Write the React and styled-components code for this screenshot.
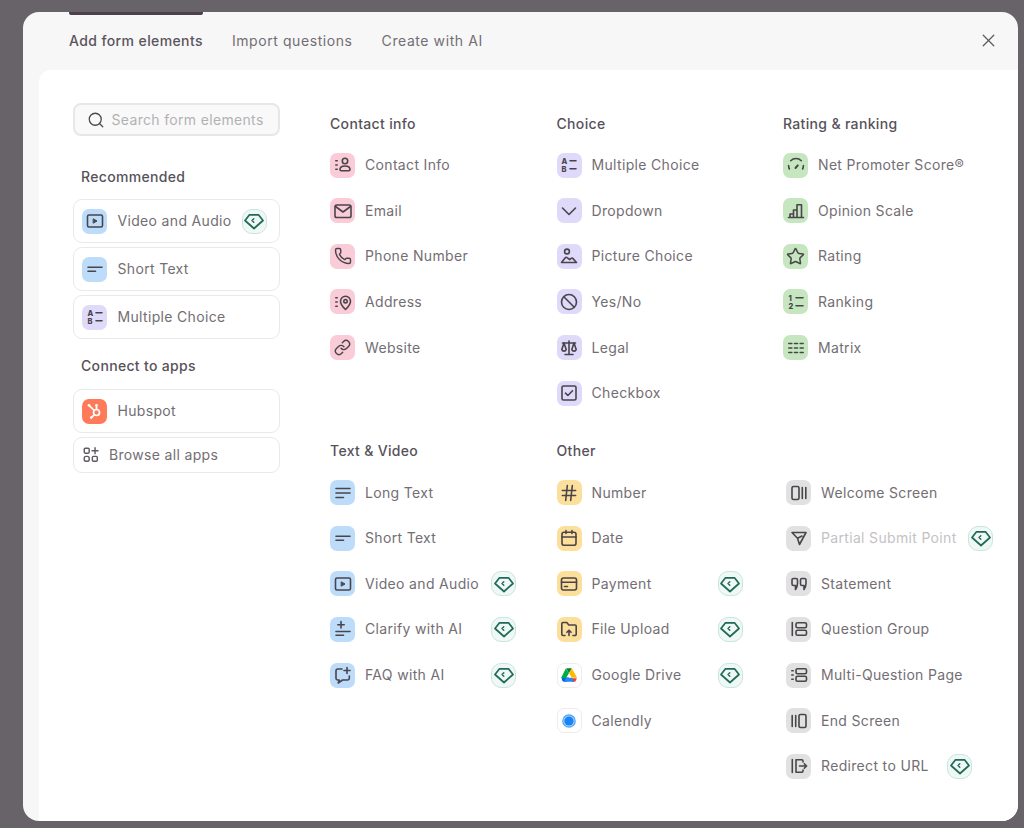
import React from 'react'
import styled, { createGlobalStyle } from 'styled-components'
import { Phone, Link, Star, Hash, X, Search } from 'lucide-react'

const GlobalStyle = createGlobalStyle`
  html, body {
    margin: 0;
    background: #686269;
    font-family: Inter, "Liberation Sans", sans-serif;
    -webkit-font-smoothing: antialiased;
  }
`

const tints = {
  pink: '#f9ccd7',
  violet: '#dfd9fa',
  green: '#c5e6bf',
  blue: '#bcdcf9',
  yellow: '#fddf9c',
  grey: '#e1e1e1',
  white: '#ffffff',
  orange: '#ff7a59',
}

const Glyph = ({ children, size = 20 }) => (
  <svg width={size} height={size} viewBox="0 0 20 20" fill="none" stroke="currentColor" strokeWidth="1.6" strokeLinecap="round" strokeLinejoin="round">
    {children}
  </svg>
)

const Letter = styled.text`
  font-family: Inter, "Liberation Sans", sans-serif;
  font-size: 7.5px;
  font-weight: 800;
  fill: currentColor;
  stroke: none;
`

const glyphs = {
  contact: <Glyph><path d="M2.8 5.8h1.4M2.8 10h1.4M2.8 14.2h1.4" /><circle cx="12" cy="6" r="2.7" /><path d="M7 14.6c0-2.2 2.2-3.6 5-3.6s5 1.4 5 3.6c0 .8-.5 1.1-1.1 1.1H8.1c-.6 0-1.1-.3-1.1-1.1z" /></Glyph>,
  email: <Glyph><rect x="2" y="4" width="16" height="12.5" rx="1.8" /><path d="M2.5 5.5 10 11l7.5-5.5" /></Glyph>,
  phone: <Phone size={18} strokeWidth={1.9} />,
  address: <Glyph><path d="M2.8 5.8h1.4M2.8 10h1.4M2.8 14.2h1.4" /><path d="M12.5 17.5c-2.8-2.5-5-5-5-8.2a5 5 0 0 1 10 0c0 3.2-2.2 5.7-5 8.2z" /><circle cx="12.5" cy="9.2" r="1.7" /></Glyph>,
  link: <Link size={17} strokeWidth={2} />,
  choice: <Glyph><Letter x="2.5" y="8.5">A</Letter><Letter x="2.5" y="16.5">B</Letter><path d="M11 5.8h6M11 13.8h6" /></Glyph>,
  dropdown: <Glyph><path d="M3.5 7 10 13.5 16.5 7" /></Glyph>,
  picture: <Glyph><circle cx="8" cy="5.5" r="2.4" /><path d="M2.5 16.5 6.300 11.800c.5-.6 1.200-.7 1.800-.2l2.600 2 1.500-1.200c.6-.5 1.400-.4 1.800.2l3.500 3.900z" /></Glyph>,
  yesno: <Glyph><circle cx="10" cy="10" r="7.5" /><path d="M4.8 4.7 15.3 15.3" /></Glyph>,
  legal: <Glyph><path d="M10 3v13.5M6 16.5h8M3.500 5h13" /><path d="M5 5 2.8 11.500a2.300 2.300 0 0 0 4.400 0zM15 5l-2.200 6.500a2.300 2.300 0 0 0 4.400 0z" /></Glyph>,
  checkbox: <Glyph><rect x="3" y="3" width="14" height="14" rx="1.5" /><path d="m6.500 10.200 2.400 2.300 4.600-4.700" /></Glyph>,
  nps: <Glyph><path d="M4.700 5.700a7.500 7.500 0 0 1 10.600 0M2.600 10.500c0 1.200.2 2.400.8 3.500M17.400 10.500c0 1.200-.2 2.400-.8 3.500" /><path d="m9.500 13 2.300-2.600" strokeWidth="2" /></Glyph>,
  scale: <Glyph><path d="M2.500 16.500h15M4 16.500V13h3.500v3.500M7.500 16.500V9H11v7.500M11 16.500V3.700h4.500v12.800" /></Glyph>,
  star: <Star size={19} strokeWidth={1.9} />,
  ranking: <Glyph><Letter x="2.5" y="8.5">1</Letter><Letter x="2.5" y="16.5">2</Letter><path d="M10 5.800h7M10 13.800h7" /></Glyph>,
  matrix: <Glyph><path d="M2.800 5.500h3M8.500 5.500h3M14.200 5.500h3M2.800 10h3M8.500 10h3M14.200 10h3M2.800 14.500h3M8.500 14.500h3M14.200 14.500h3" /></Glyph>,
  longText: <Glyph><path d="M3 5.500h14M3 10h14M3 14.500h7.500" /></Glyph>,
  shortText: <Glyph><path d="M3 8.300h14M3 12.300h7.500" /></Glyph>,
  video: <Glyph><rect x="2.5" y="4" width="15" height="12" rx="1.5" /><path d="M8.500 8l3.500 2-3.500 2z" fill="currentColor" strokeWidth="1" /></Glyph>,
  clarify: <Glyph><path d="M8 2.500v6.500M4.800 5.800h6.400M3 12.500h14M3 16.300h7.500" /></Glyph>,
  faq: <Glyph><path d="M9 4H4.800A1.800 1.800 0 0 0 3 5.800v7.400A1.800 1.800 0 0 0 4.800 15h1.400l-1 3 4.300-3h5a1.800 1.800 0 0 0 1.800-1.800V11" /><path d="M14 2.500v6M11 5.500h6" /></Glyph>,
  hash: <Hash size={20} strokeWidth={1.9} />,
  date: <Glyph><rect x="3" y="4.2" width="14" height="13" rx="2" /><path d="M3 9h14M7 2.500v3M13 2.500v3" /></Glyph>,
  payment: <Glyph><rect x="2.5" y="4" width="15" height="12" rx="2" /><path d="M2.500 8.200h15M5.500 12.500h3" /></Glyph>,
  upload: <Glyph><path d="M6 16.500H4a1.200 1.200 0 0 1-1.200-1.200V4.700A1.200 1.200 0 0 1 4 3.500h3.800l2 2.500H16a1.200 1.200 0 0 1 1.200 1.200v8.100a1.200 1.200 0 0 1-1.200 1.200h-2" /><path d="M10 16.500v-5M7.900 13.300 10 11.200l2.100 2.100" /></Glyph>,
  welcome: <Glyph><rect x="3" y="3.5" width="7" height="13" rx="1.5" /><path d="M13.300 4.500v11M16.800 4.500v11" /></Glyph>,
  partial: <Glyph><path d="M3 4.500h14l-6.500 12-2-6.300zM8.500 10.200 13 8" /></Glyph>,
  statement: <Glyph><path d="M3 6a1.500 1.500 0 0 1 1.500-1.500h2.500A1.500 1.500 0 0 1 8.500 6v3.500c0 2.200-.7 4-2 6V11.500H4.500A1.500 1.500 0 0 1 3 10zM11.500 6A1.500 1.500 0 0 1 13 4.500h2.500A1.500 1.500 0 0 1 17 6v3.500c0 2.200-.7 4-2 6V11.500h-2a1.500 1.500 0 0 1-1.500-1.500z" /></Glyph>,
  group: <Glyph><path d="M3.300 3.500v13" /><rect x="7" y="3.8" width="10.5" height="5" rx="1.5" /><rect x="7" y="11.2" width="10.5" height="5" rx="1.5" /></Glyph>,
  multi: <Glyph><path d="M2.800 5.800h1.400M2.800 10h1.400M2.800 14.200h1.400" /><rect x="7" y="3.8" width="10.5" height="5" rx="1.5" /><rect x="7" y="11.2" width="10.5" height="5" rx="1.5" /></Glyph>,
  end: <Glyph><path d="M3.200 4.500v11M6.700 4.500v11" /><rect x="10" y="3.5" width="7" height="13" rx="1.5" /></Glyph>,
  redirect: <Glyph><path d="M3.300 3.500v13M14 6V5a1.200 1.200 0 0 0-1.200-1.200H7v12.400h5.800A1.200 1.200 0 0 0 14 15v-1" /><path d="M10.500 10h7M15.300 7.700l2.300 2.300-2.300 2.300" /></Glyph>,
  browse: <Glyph size={18}><rect x="2.5" y="2.5" width="5.5" height="5.5" rx="1.2" /><path d="M14.500 2v6.500M11.200 5.200h6.600" /><rect x="2.5" y="11.5" width="5.5" height="5.5" rx="2" /><rect x="11.5" y="11.5" width="5.5" height="5.5" rx="1.2" /></Glyph>,
  hubspot: (
    <svg width="20" height="20" viewBox="0 0 20 20" fill="none" stroke="#fff" strokeWidth="1.7" strokeLinecap="round">
      <circle cx="11.5" cy="11.5" r="3" />
      <path d="M9.300 9.500 4.500 4.800M11.500 8.500V5M9.200 13.800 6.800 16.200" />
      <circle cx="4" cy="4.2" r="1.3" fill="#fff" stroke="none" />
      <circle cx="11.5" cy="4.2" r="1.3" fill="#fff" stroke="none" />
      <circle cx="6.2" cy="16.6" r="1.3" fill="#fff" stroke="none" />
    </svg>
  ),
  drive: (
    <svg width="16" height="16" viewBox="0 0 20 18" stroke="none">
      <path d="M1.500 15.500 3 17.500h4L10 12H0.500z" fill="#0066da" />
      <path d="M6 1 0.500 11.800c-.2.300-.2.600 0 .9H6.500L10 6.500z" fill="#00ac47" />
      <path d="M13 17.500h3.800c.5 0 1-.3 1.300-.8l1.400-2.700c.2-.3.200-.6 0-.9H13.500z" fill="#ea4335" />
      <path d="M6.500 1 10 6.500 13.500 1c-.3-.3-.7-.5-1.100-.5H7.600c-.4 0-.8.200-1.100.5z" fill="#00832d" />
      <path d="M6.500 12.500 3.500 17.500h13l-3-5z" fill="#2684fc" />
      <path d="M13.600 1 10 6.500l3.500 6h6.300c.1-.3 0-.6-.1-.9z" fill="#ffba00" />
    </svg>
  ),
  calendly: (
    <svg width="16" height="16" viewBox="0 0 16 16" stroke="none">
      <circle cx="8" cy="8" r="6.8" fill="#4fa3fa" />
      <circle cx="8" cy="8" r="5.6" fill="#a9d2fd" />
      <circle cx="8" cy="8" r="4.6" fill="#1a84f5" />
    </svg>
  ),
}

const GemIcon = () => (
  <svg width="20" height="20" viewBox="0 0 20 20" fill="none" stroke="#1f6a58" strokeWidth="1.7" strokeLinejoin="round" strokeLinecap="round">
    <path d="M5.500 3.800h9L19 9.500 10 17.500 1 9.500z" />
    <path d="M9.800 7.800 8 9.500l1.800 1.700" strokeWidth="1.4" />
  </svg>
)

const sidebarRecommended = [
  { label: 'Video and Audio', icon: 'video', tint: 'blue', premium: true },
  { label: 'Short Text', icon: 'shortText', tint: 'blue' },
  { label: 'Multiple Choice', icon: 'choice', tint: 'violet' },
]

const groups = [
  {
    title: 'Contact info',
    tint: 'pink',
    items: [
      { label: 'Contact Info', icon: 'contact' },
      { label: 'Email', icon: 'email' },
      { label: 'Phone Number', icon: 'phone' },
      { label: 'Address', icon: 'address' },
      { label: 'Website', icon: 'link' },
    ],
  },
  {
    title: 'Choice',
    tint: 'violet',
    items: [
      { label: 'Multiple Choice', icon: 'choice' },
      { label: 'Dropdown', icon: 'dropdown' },
      { label: 'Picture Choice', icon: 'picture' },
      { label: 'Yes/No', icon: 'yesno' },
      { label: 'Legal', icon: 'legal' },
      { label: 'Checkbox', icon: 'checkbox' },
    ],
  },
  {
    title: 'Rating & ranking',
    tint: 'green',
    items: [
      { label: 'Net Promoter Score®', icon: 'nps' },
      { label: 'Opinion Scale', icon: 'scale' },
      { label: 'Rating', icon: 'star' },
      { label: 'Ranking', icon: 'ranking' },
      { label: 'Matrix', icon: 'matrix' },
    ],
  },
  {
    title: 'Text & Video',
    tint: 'blue',
    items: [
      { label: 'Long Text', icon: 'longText' },
      { label: 'Short Text', icon: 'shortText' },
      { label: 'Video and Audio', icon: 'video', premium: true },
      { label: 'Clarify with AI', icon: 'clarify', premium: true },
      { label: 'FAQ with AI', icon: 'faq', premium: true },
    ],
  },
  {
    title: 'Other',
    tint: 'yellow',
    items: [
      { label: 'Number', icon: 'hash' },
      { label: 'Date', icon: 'date' },
      { label: 'Payment', icon: 'payment', premium: true },
      { label: 'File Upload', icon: 'upload', premium: true },
      { label: 'Google Drive', icon: 'drive', tint: 'white', premium: true },
      { label: 'Calendly', icon: 'calendly', tint: 'white' },
    ],
  },
  {
    tint: 'grey',
    inset: true,
    items: [
      { label: 'Welcome Screen', icon: 'welcome' },
      { label: 'Partial Submit Point', icon: 'partial', premium: true, disabled: true, wide: true },
      { label: 'Statement', icon: 'statement' },
      { label: 'Question Group', icon: 'group' },
      { label: 'Multi-Question Page', icon: 'multi' },
      { label: 'End Screen', icon: 'end' },
      { label: 'Redirect to URL', icon: 'redirect', premium: true },
    ],
  },
]

export default function App() {
  return (
    <>
      <GlobalStyle />
      <Page>
        <Modal>
          <Header>
            <Tabs>
              <Tab $active>Add form elements</Tab>
              <Tab>Import questions</Tab>
              <Tab>Create with AI</Tab>
            </Tabs>
            <CloseButton><X size={21} strokeWidth={1.5} /></CloseButton>
          </Header>
          <Body>
            <Sidebar>
              <SearchBox>
                <Search size={18} strokeWidth={1.7} color="#4d474e" />
                <SearchInput placeholder="Search form elements" />
              </SearchBox>
              <SideHeading $top={31} $bottom={12}>Recommended</SideHeading>
              {sidebarRecommended.map((item) => (
                <SideCard key={item.label}>
                  <IconTile $tint={item.tint}>{glyphs[item.icon]}</IconTile>
                  <ItemLabel>{item.label}</ItemLabel>
                  {item.premium && <Badge><GemIcon /></Badge>}
                </SideCard>
              ))}
              <SideHeading $top={13} $bottom={13}>Connect to apps</SideHeading>
              <SideCard>
                <IconTile $tint="orange">{glyphs.hubspot}</IconTile>
                <ItemLabel>Hubspot</ItemLabel>
              </SideCard>
              <BrowseButton>
                {glyphs.browse}
                <ItemLabel>Browse all apps</ItemLabel>
              </BrowseButton>
            </Sidebar>
            <Sections>
              {groups.map((group, i) => (
                <Section key={i} $inset={group.inset}>
                  <SectionHeading>{group.title}</SectionHeading>
                  <ItemList>
                    {group.items.map((item) => (
                      <Item key={item.label} $wide={item.wide}>
                        <IconTile $tint={item.tint || group.tint}>{glyphs[item.icon]}</IconTile>
                        <ItemLabel $disabled={item.disabled}>{item.label}</ItemLabel>
                        {item.premium && <Badge><GemIcon /></Badge>}
                      </Item>
                    ))}
                  </ItemList>
                </Section>
              ))}
            </Sections>
          </Body>
        </Modal>
      </Page>
    </>
  )
}

const Page = styled.div`
  box-sizing: border-box;
  height: 828px;
  padding: 12px 6px 7px 23px;
`

const Modal = styled.div`
  display: flex;
  flex-direction: column;
  height: 100%;
  background: #f7f7f7;
  border-radius: 16px;
  overflow: hidden;
`

const Header = styled.div`
  display: flex;
  align-items: center;
  justify-content: space-between;
  height: 58px;
  flex-shrink: 0;
  padding: 0 19px 0 46px;
`

const Tabs = styled.div`
  display: flex;
  align-items: stretch;
  height: 100%;
  gap: 29px;
`

const Tab = styled.div`
  position: relative;
  display: flex;
  align-items: center;
  padding-bottom: 2px;
  font-size: 14px;
  font-weight: ${(p) => (p.$active ? 500 : 400)};
  letter-spacing: ${(p) => (p.$active ? '0.39px' : '0.58px')};
  color: ${(p) => (p.$active ? '#5a545d' : '#736e74')};

  &::before {
    content: '';
    display: ${(p) => (p.$active ? 'block' : 'none')};
    position: absolute;
    top: 0;
    left: 0;
    right: 0;
    height: 3px;
    background: #4c4049;
    border-radius: 0 0 2px 2px;
  }
`

const CloseButton = styled.div`
  display: flex;
  padding-bottom: 2px;
  color: #5f5a61;
`

const Body = styled.div`
  flex: 1;
  display: flex;
  gap: 50px;
  margin-left: 16px;
  padding: 33px 0 0 34px;
  background: #fff;
  border-top-left-radius: 12px;
`

const Sidebar = styled.div`
  display: flex;
  flex-direction: column;
  width: 207px;
  flex-shrink: 0;
`

const SearchBox = styled.div`
  display: flex;
  align-items: center;
  gap: 6.5px;
  box-sizing: border-box;
  height: 33px;
  padding: 0 12px;
  background: #f9f9f9;
  border: 2px solid #e7e7e7;
  border-radius: 8px;
`

const SearchInput = styled.input`
  flex: 1;
  min-width: 0;
  border: none;
  outline: none;
  padding: 0;
  background: transparent;
  font-family: inherit;
  font-size: 14px;
  letter-spacing: 0.33px;

  &::placeholder {
    color: #b4b1b5;
    opacity: 1;
  }
`

const SideHeading = styled.div`
  height: 20px;
  margin: ${(p) => p.$top}px 0 ${(p) => p.$bottom}px 8px;
  font-size: 14px;
  line-height: 20px;
  font-weight: 500;
  letter-spacing: 0.33px;
  color: #57525a;
`

const SideCard = styled.div`
  display: flex;
  align-items: center;
  gap: 10.5px;
  box-sizing: border-box;
  height: 44px;
  padding: 0 12.5px 0 8px;
  margin-bottom: 4px;
  border: 1.5px solid #e9e9e9;
  border-radius: 9px;
  background: #fff;
`

const BrowseButton = styled(SideCard)`
  height: 36px;
  gap: 9px;
  padding-left: 8px;
  color: #5f5a61;
`

const Sections = styled.div`
  display: grid;
  grid-template-columns: repeat(3, 226.5px);
  grid-template-rows: 327.5px auto;
  padding-top: 10.8px;
`

const Section = styled.section`
  display: flex;
  flex-direction: column;
  margin-left: ${(p) => (p.$inset ? '3px' : '0')};
`

const SectionHeading = styled.h3`
  height: 20px;
  margin: 0 0 18.9px;
  font-size: 14px;
  line-height: 20px;
  font-weight: 500;
  letter-spacing: 0.33px;
  color: #57525a;
`

const ItemList = styled.div`
  display: flex;
  flex-direction: column;
  gap: 20.6px;
`

const Item = styled.div`
  display: flex;
  align-items: center;
  gap: 10px;
  width: ${(p) => (p.$wide ? '207px' : '186px')};
  height: 25px;
`

const IconTile = styled.div`
  display: flex;
  align-items: center;
  justify-content: center;
  box-sizing: border-box;
  width: 25px;
  height: 25px;
  flex-shrink: 0;
  border-radius: 7px;
  background: ${(p) => tints[p.$tint]};
  border: ${(p) => (p.$tint === 'white' ? '1px solid #ececec' : 'none')};
  color: #4a444b;
`

const ItemLabel = styled.span`
  flex: 1;
  min-width: 0;
  padding-bottom: 1px;
  font-size: 14px;
  letter-spacing: 0.33px;
  white-space: nowrap;
  color: ${(p) => (p.$disabled ? '#c4c2c5' : '#736e74')};
`

const Badge = styled.span`
  display: flex;
  align-items: center;
  justify-content: center;
  box-sizing: border-box;
  width: 25px;
  height: 25px;
  flex-shrink: 0;
  border-radius: 10px;
  background: #eff8f5;
  border: 1.5px solid #c8e6de;
`
